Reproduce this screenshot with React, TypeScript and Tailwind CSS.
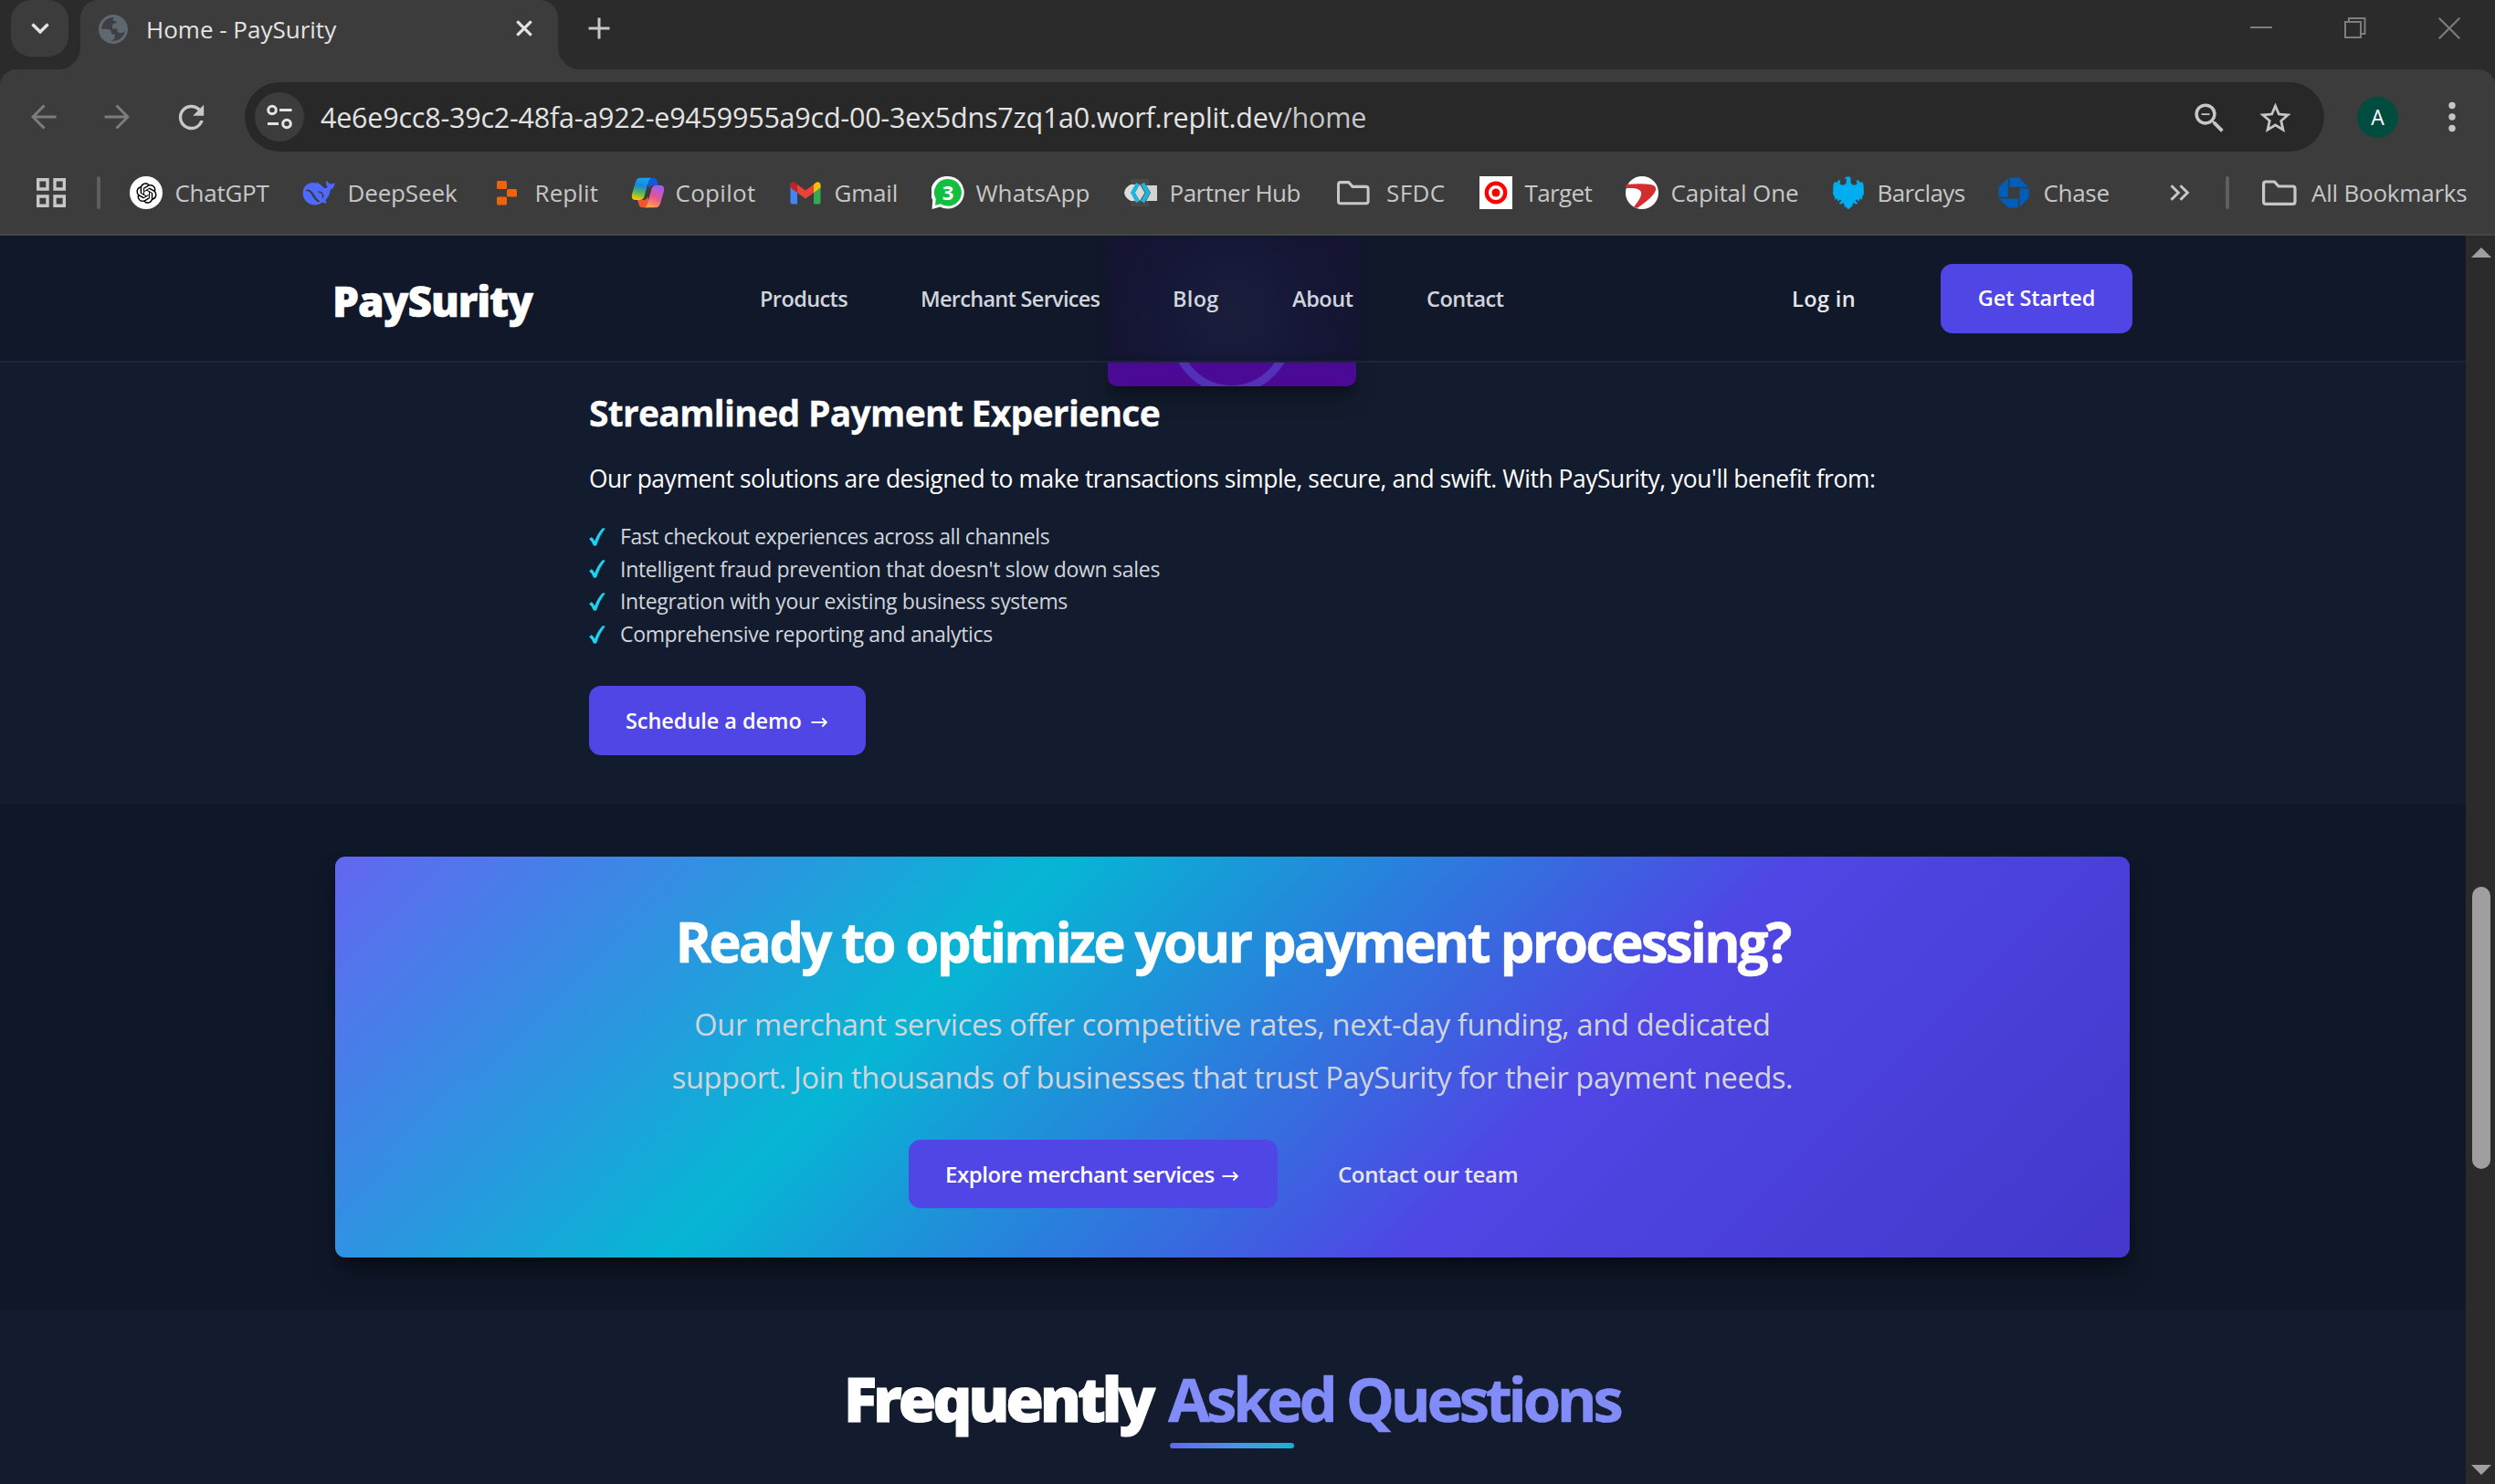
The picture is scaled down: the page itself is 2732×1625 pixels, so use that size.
import type { ReactNode } from "react";
import { RiOpenaiFill } from "react-icons/ri";
import { MdRefresh, MdStarBorder, MdZoomOut } from "react-icons/md";

const FolderIcon = () => (
  <svg width="38" height="28" viewBox="0 0 38 28" fill="none" stroke="#c7c7c7" strokeWidth="3.200" strokeLinejoin="round">
    <path d="M4 2H13.5L18 7H33.5Q36 7 36 9.5V24Q36 26.3 33.5 26.3H4Q1.6 26.3 1.6 24V4.5Q1.6 2 4 2Z" />
  </svg>
);

const GlobeIcon = () => (
  <svg width="32" height="32" viewBox="0 0 32 32">
    <circle cx="16" cy="16" r="16" fill="#5f6770" />
    <path
      d="M17 3.2C10 2.600 4.500 7.500 3.400 13.500L3.600 16H10.500Q13.500 16 14 19.500V21.500H17.500V26.500L13.500 28.500C21 30 27.500 25 28.800 17.800C27 20.500 22.500 21 20.500 18.500V15.500H15V12Q15 10 17.500 10H19.500V7H16.500L15.500 5.500Z"
      fill="#3c3f43"
    />
    <path d="M19.500 3.500V9.500H16V14.500H21.500V18.500H25L28.500 16.500V11Q25.500 5.500 19.500 3.500Z" fill="#5f6770" />
  </svg>
);

const ChatGptIcon = () => (
  <span className="flex size-9 items-center justify-center rounded-full bg-white text-[27px] text-black">
    <RiOpenaiFill />
  </span>
);

const DeepSeekIcon = () => (
  <svg width="36" height="28" viewBox="0 0 36 28">
    <path
      d="M35.500 3.200C34.500 3 34 4.300 31.800 4.500C29.300 4.700 28.300 2.500 26.300 0.800C25.700 3.800 26 6 27.800 7.800C26.500 9 25.300 9.600 23.500 8.500C21.500 7.200 20.600 5 17.500 3.800L17 2.300L15.300 3.400C8 1.200 0.500 6.300 0.600 14.300C0.700 22 6.800 27.500 14.200 27.400C17.500 27.400 20 26.200 22 24.600C24 25.600 26 25.600 27.200 24.900C26.500 24.100 25.600 23.600 25.200 22.400C28.700 19 30.500 14.500 30.500 11C33.600 9.700 35.600 6.500 35.500 3.200Z"
      fill="#4d6bfe"
    />
    <path d="M3 12.500C4.500 8.800 9.500 10.500 12 14.500C14.500 18.500 16 21.500 19.500 23.500L17.500 24.600C13.500 22.500 11.500 17.500 8.800 14.200C6.800 12 4.500 11.800 3 12.500Z" fill="#3c3c3c" />
    <path d="M17.500 13.500Q21 12.200 22.500 16.500Q23 18.800 21.800 19.400" stroke="#3c3c3c" strokeWidth="1.600" fill="none" />
  </svg>
);

const ReplitIcon = () => (
  <svg width="36" height="36" viewBox="0 0 36 36" fill="#f26207">
    <rect x="8" y="5" width="11" height="9" rx="1.500" />
    <rect x="19" y="14" width="11" height="8.500" rx="1.500" />
    <rect x="8" y="22.500" width="11" height="9" rx="1.500" />
  </svg>
);

const CopilotIcon = () => (
  <svg width="37" height="34" viewBox="0 0 37 34" className="ml-0.5 shrink-0">
    <defs>
      <linearGradient id="cpA" x1="0.5" y1="0" x2="0.3" y2="1">
        <stop offset="0" stopColor="#0fa8f0" />
        <stop offset="0.35" stopColor="#1a86dd" />
        <stop offset="0.65" stopColor="#52b760" />
        <stop offset="0.95" stopColor="#f5c400" />
      </linearGradient>
      <linearGradient id="cpB" x1="0.7" y1="0" x2="0.3" y2="1">
        <stop offset="0" stopColor="#a15cf5" />
        <stop offset="0.5" stopColor="#e0559c" />
        <stop offset="0.8" stopColor="#fb7f69" />
        <stop offset="1" stopColor="#ffa94d" />
      </linearGradient>
    </defs>
    <path d="M19 0.800H25Q27.500 0.800 28.500 4L30 9H24Q21 9 20 12L17 5Z" fill="#1559d6" />
    <path d="M18 33.200H12.500Q9.500 33.200 8.600 30L7 25H14Q17 25 18 21L20 29Z" fill="#f0572d" />
    <path d="M10 0.800H22Q20 1.500 19 5L14.500 21Q13.400 25 9.500 25H5Q-0.500 25 1.200 18L5 5Q6.500 0.800 10 0.800Z" fill="url(#cpA)" />
    <path d="M27 33.200H15Q17 32.500 18 29L22.500 13Q23.600 9 27.500 9H32Q37.500 9 35.800 16L32 29Q30.500 33.200 27 33.200Z" fill="url(#cpB)" />
  </svg>
);

const GmailIcon = () => (
  <svg width="34" height="25" viewBox="0 0 34 25">
    <path d="M0.500 3.500V22.500Q0.500 24.500 2.500 24.500H8V11Z" fill="#4285f4" />
    <path d="M26 11V24.500H31.500Q33.500 24.500 33.500 22.500V3.500Z" fill="#34a853" />
    <path d="M26 3V12L33.500 6.500V3.800Q33.500 0.300 30 0.300Q29 0.300 28 1.200Z" fill="#fbbc04" />
    <path d="M8 3V12L17 18.500L26 12V3L17 9.500Z" fill="#ea4335" />
    <path d="M0.500 3.800V6.500L8 12V3L6 1.200Q5 0.300 4 0.300Q0.500 0.300 0.500 3.800Z" fill="#c5221f" />
  </svg>
);

const WhatsAppIcon = () => (
  <svg width="36" height="36" viewBox="0 0 36 36" className="ml-0.5 shrink-0">
    <path d="M18 0A17.800 17.800 0 1 1 9.500 33.500L0.500 36L1.200 26A17.800 17.800 0 0 1 18 0Z" fill="#fff" />
    <path d="M18 3A14.800 14.800 0 1 1 10 30.200L4 32L4.800 25A14.800 14.800 0 0 1 18 3Z" fill="#12bf3f" />
    <text x="18" y="26" textAnchor="middle" fontFamily="Open Sans, sans-serif" fontWeight="700" fontSize="22" fill="#fff">
      3
    </text>
  </svg>
);

const PartnerIcon = () => (
  <svg width="36" height="32" viewBox="0 0 36 32">
    <rect x="7" y="1" width="20" height="30" fill="#474747" />
    <path d="M7 7H14L8 16L14 25H7Q1 22 0 16Q1 10 7 7Z" fill="#dcdcdc" />
    <path d="M24 8H36V25H24L29 16Z" fill="#d2d2d2" />
    <path d="M17 7L22.500 16L17 25L11.500 16Z" fill="#d8d8d8" />
    <path d="M15 6L9.500 16L15 26" stroke="#1ab7dc" strokeWidth="4.500" fill="none" />
    <path d="M20 6L26 16L20 26" stroke="#1ab7dc" strokeWidth="4.500" fill="none" />
  </svg>
);

const TargetIcon = () => (
  <svg width="36" height="36" viewBox="0 0 36 36">
    <rect width="36" height="36" fill="#fff" />
    <circle cx="18" cy="18" r="10.200" fill="none" stroke="#f00" strokeWidth="4.400" />
    <circle cx="18" cy="18" r="4.500" fill="#f00" />
  </svg>
);

const CapitalOneIcon = () => (
  <svg width="36" height="36" viewBox="0 0 36 36">
    <circle cx="18" cy="18" r="18" fill="#fff" />
    <path
      d="M0.800 9Q17 7.600 27 9Q34 10.200 33 15C31.500 21.500 21 29 12.500 35L9 33.500C13.500 28 18 22 17 17.500C16 13.500 7 12.300 0.200 13.500Z"
      fill="#d22e30"
    />
  </svg>
);

const BarclaysIcon = () => (
  <svg width="36" height="36" viewBox="0 0 36 36">
    <path
      d="M16 3L13.500 2.500L16 0.500H19.500L20.500 2V7L22.500 9.500L26 9.500L27.500 8L26.500 5L29 4L30.500 7L33 6L34.500 9L35 19L33.500 22L32.500 26L30.500 24L29.500 28L27.500 25.500L25.500 26.500L28.500 30L26 30.500L23.500 29L22 33L18 36L14 33L12.500 29L10 30.500L7.500 30L10.500 26.500L8.500 25.500L6.500 28L5.500 24L3.500 26L2.500 22L1 19L1.500 9L3 6L5.500 7L7 4L9.500 5L8.500 8L10 9.500L13.500 9.500L15.500 7.500Z"
      fill="#00aeef"
    />
  </svg>
);

const ChaseIcon = () => (
  <svg width="34" height="34" viewBox="0 0 34 34" fill="#005eb8" className="mr-0.5">
    <path d="M12.500 0.500H23L33 10.800H12.500Z" />
    <path d="M33.500 12.500V23L23.500 33V12.500Z" />
    <path d="M21.800 33.500H11L1 23.500H21.800Z" />
    <path d="M0.500 21.800V11L10.800 1V21.800Z" />
  </svg>
);

type Bookmark = { label: string; icon: ReactNode; item: string; tracking: string };

const bookmarks: Bookmark[] = [
  { label: "ChatGPT", icon: <ChatGptIcon />, item: "w-[189px]", tracking: "tracking-[-0.27px]" },
  { label: "DeepSeek", icon: <DeepSeekIcon />, item: "w-[205px]", tracking: "tracking-[-0.15px]" },
  { label: "Replit", icon: <ReplitIcon />, item: "w-[154px]", tracking: "tracking-[0.1px]" },
  { label: "Copilot", icon: <CopilotIcon />, item: "w-[174px]", tracking: "tracking-[0.29px]" },
  { label: "Gmail", icon: <GmailIcon />, item: "w-[155px]", tracking: "tracking-[-0.2px]" },
  { label: "WhatsApp", icon: <WhatsAppIcon />, item: "w-[212px]", tracking: "tracking-[0.1px]" },
  { label: "Partner Hub", icon: <PartnerIcon />, item: "w-[233px]", tracking: "tracking-[-0.5px]" },
  { label: "SFDC", icon: <FolderIcon />, item: "w-[156px]", tracking: "tracking-[0.4px]" },
  { label: "Target", icon: <TargetIcon />, item: "w-[160px]", tracking: "tracking-[-0.6px]" },
  { label: "Capital One", icon: <CapitalOneIcon />, item: "w-[226px]", tracking: "tracking-[-0.1px]" },
  { label: "Barclays", icon: <BarclaysIcon />, item: "w-[182px]", tracking: "tracking-[-0.6px]" },
  { label: "Chase", icon: <ChaseIcon />, item: "w-[188px]", tracking: "tracking-[-0.3px]" },
];

const navLinks = [
  { label: "Products", cls: "w-[176px] tracking-[-0.6px]" },
  { label: "Merchant Services", cls: "w-[276px] tracking-[-0.7px]" },
  { label: "Blog", cls: "w-[131px] tracking-[0.3px]" },
  { label: "About", cls: "w-[147px] tracking-[-0.4px]" },
  { label: "Contact", cls: "w-[400px] tracking-[-0.5px]" },
];

const benefits = [
  { text: "Fast checkout experiences across all channels", cls: "tracking-[-0.42px]" },
  { text: "Intelligent fraud prevention that doesn't slow down sales", cls: "tracking-[-0.29px]" },
  { text: "Integration with your existing business systems", cls: "tracking-[-0.34px]" },
  { text: "Comprehensive reporting and analytics", cls: "tracking-[-0.34px]" },
];

const Arrow = () => (
  <svg width="18" height="12" viewBox="0 0 18 12" fill="none" stroke="#fff" strokeWidth="1.900" className="mt-1 shrink-0">
    <path d="M0.500 6H16.500M12.300 1.500L16.800 6L12.300 10.500" />
  </svg>
);

const Check = () => (
  <svg width="18" height="20" viewBox="0 0 18 20" fill="#22d3ee" stroke="#22d3ee" strokeWidth="0.700">
    <path d="M0.500 12.200L2.900 10.600Q4 11 6.200 15.300Q9 7 14.600 0.800L17.300 0.800Q10.800 9 7.800 19.200H5.200Q3 14 0.500 12.200Z" />
  </svg>
);

function TabStrip() {
  return (
    <div className="flex h-[76px] bg-[#2b2b2b]">
      <div className="relative z-10 ml-3 flex h-[62px] w-[63px] items-center justify-center rounded-[22px] bg-[#3c3c3c]">
        <svg width="20" height="12" viewBox="0 0 20 12" fill="none" stroke="#e3e3e3" strokeWidth="3.400">
          <path d="M1.500 1.500L10 10L18.500 1.500" />
        </svg>
      </div>
      <div className="relative ml-[13px] flex w-[523px] rounded-t-[20px] bg-[#3c3c3c]">
        <span className="absolute bottom-0 -left-[24px] size-6 bg-[#3c3c3c]">
          <span className="block size-6 rounded-br-[24px] bg-[#2b2b2b]" />
        </span>
        <span className="absolute -right-[24px] bottom-0 size-6 bg-[#3c3c3c]">
          <span className="block size-6 rounded-bl-[24px] bg-[#2b2b2b]" />
        </span>
        <div className="ml-5 flex h-[63px] items-center">
          <GlobeIcon />
        </div>
        <span className="ml-5 h-16 w-[405px] text-[26px] leading-[64px] text-[#e3e3e3]">Home - PaySurity</span>
        <svg width="18" height="18" viewBox="0 0 18 18" fill="none" stroke="#e3e3e3" strokeWidth="3.200" className="mt-[22px] shrink-0">
          <path d="M1.300 1.300L16.700 16.700M16.700 1.300L1.300 16.700" />
        </svg>
      </div>
      <svg width="24" height="24" viewBox="0 0 24 24" fill="none" stroke="#c7c7c7" strokeWidth="3" className="mt-[19px] ml-[33px]">
        <path d="M0.500 12H23.500M12 0.500V23.500" />
      </svg>
      <div className="mt-[19px] mr-[38px] ml-auto flex gap-[79px]">
        <svg width="24" height="24" viewBox="0 0 24 24" stroke="#7e7e7e" strokeWidth="2">
          <path d="M0 11H24" />
        </svg>
        <svg width="24" height="24" viewBox="0 0 24 24" fill="none" stroke="#7e7e7e" strokeWidth="2">
          <path d="M1 5H18V22H1ZM5 5V1H22.500V18H18" />
        </svg>
        <svg width="24" height="24" viewBox="0 0 24 24" fill="none" stroke="#7e7e7e" strokeWidth="2">
          <path d="M0.700 0.700L23.300 23.300M23.300 0.700L0.700 23.300" />
        </svg>
      </div>
    </div>
  );
}

function Toolbar() {
  return (
    <div className="bg-[#2b2b2b]">
      <div className="flex h-[90px] items-end rounded-t-[18px] bg-[#3c3c3c] pl-[34px]">
        <div className="flex h-[76px] w-full items-center">
          <svg width="28" height="28" viewBox="0 0 28 28" fill="none" stroke="#7c7c7c" strokeWidth="3">
            <path d="M27.500 14H2.500M14.500 1.500L2 14L14.500 26.500" />
          </svg>
          <svg width="28" height="28" viewBox="0 0 28 28" fill="none" stroke="#7c7c7c" strokeWidth="3" className="ml-[52px]">
            <path d="M0.500 14H25.500M13.500 1.500L26 14L13.500 26.500" />
          </svg>
          <MdRefresh className="ml-[47px] size-[41px] text-[#c7c7c7]" />
          <div className="ml-[38px] flex h-[76px] w-[2277px] shrink-0 items-center rounded-[38px] bg-[#282828]">
            <span className="ml-[11px] flex size-[54px] items-center justify-center rounded-full bg-[#3c3c3c]">
              <svg width="28" height="28" viewBox="0 0 28 28" fill="none" stroke="#e3e3e3" strokeWidth="3">
                <circle cx="6" cy="6.500" r="4.300" />
                <path d="M14 6.500H27.500M1 21.500H13" />
                <circle cx="22" cy="21.500" r="4.300" />
              </svg>
            </span>
            <span className="ml-[18px] text-[30.5px] leading-[76px] tracking-[-0.23px] whitespace-nowrap text-[#e3e3e3]">
              4e6e9cc8-39c2-48fa-a922-e9459955a9cd-00-3ex5dns7zq1a0.worf.replit.dev
              <span className="text-[#c7c7c7]">/home</span>
            </span>
            <MdZoomOut className="mt-0.5 ml-auto size-[43px] text-[#c7c7c7]" />
            <MdStarBorder className="mt-0.5 mr-[33px] ml-[30px] size-[41px] text-[#c7c7c7]" />
          </div>
          <span className="ml-9 flex size-[45px] items-center justify-center rounded-full bg-[#004d40] text-[23px] leading-none text-white">
            A
          </span>
          <svg width="8" height="34" viewBox="0 0 8 34" fill="#c7c7c7" className="ml-[55px]">
            <circle cx="4" cy="4.500" r="3.700" />
            <circle cx="4" cy="17" r="3.700" />
            <circle cx="4" cy="29.500" r="3.700" />
          </svg>
        </div>
      </div>
    </div>
  );
}

function BookmarkBar() {
  return (
    <div className="flex h-[92px] items-center border-b-2 border-[#474747] bg-[#3c3c3c] pl-10 text-[26px] whitespace-nowrap text-[#c7c7c7]">
      <svg width="32" height="32" viewBox="0 0 32 32" fill="none" stroke="#c7c7c7" strokeWidth="3.400">
        <path d="M1.700 1.700H12V12H1.700ZM20 1.700H30.300V12H20ZM1.700 20H12V30.300H1.700ZM20 20H30.300V30.300H20Z" />
      </svg>
      <span className="mr-8 ml-[34px] h-9 w-1 rounded-full bg-[#5f5f5f]" />
      {bookmarks.map((b) => (
        <div key={b.label} className={`flex shrink-0 items-center ${b.item}`}>
          <span className={`flex w-9 shrink-0 justify-center ${b.label === "SFDC" ? "mr-[18px]" : "mr-[13.5px]"}`}>{b.icon}</span>
          <span className={`leading-9 ${b.tracking}`}>{b.label}</span>
        </div>
      ))}
      <svg width="22" height="18" viewBox="0 0 22 18" fill="none" stroke="#c7c7c7" strokeWidth="3">
        <path d="M1.500 1.200L9.300 9L1.500 16.800M11.500 1.200L19.300 9L11.500 16.800" />
      </svg>
      <span className="mr-9 ml-[39px] h-9 w-1 rounded-full bg-[#5f5f5f]" />
      <FolderIcon />
      <span className="ml-4 leading-9 tracking-[-0.22px]">All Bookmarks</span>
    </div>
  );
}

function SiteHeader() {
  return (
    <header className="relative flex h-[139px] items-center overflow-hidden border-b-2 border-[#1d2637] bg-[#101829] pl-[364px]">
      <div className="absolute top-0 left-[1210px] h-[140px] w-[279px] bg-[radial-gradient(circle_at_50%_60%,#1a1e3b_0,#161837_70px,#151533_130px,#141632_100%)] blur-[4px]" />
      <span className="relative mt-1 w-[468px] text-[46px] leading-[60px] font-extrabold tracking-[-1.1px] text-white [-webkit-text-stroke:0.6px_white]">
        PaySurity
      </span>
      <nav className="relative mt-px flex text-[23.5px] leading-9 font-semibold whitespace-nowrap text-[#d1d5db]">
        {navLinks.map((l) => (
          <a key={l.label} className={l.cls}>
            {l.label}
          </a>
        ))}
        <a className="w-[163px] tracking-[0.4px] text-[#e5e7eb]">Log in</a>
      </nav>
      <button className="h-[76px] w-[210px] rounded-[13px] bg-[#4f46e5] pt-px text-[23.5px] font-semibold tracking-[-0.1px] text-white">
        Get Started
      </button>
    </header>
  );
}

function Experience() {
  return (
    <section className="relative h-[484px] bg-[#131c2e] pt-[27px] pl-[645px]">
      <div className="absolute top-0 left-[1213px] h-[26px] w-[272px] rounded-b-[10px] shadow-[0_14px_26px_-4px_rgba(0,0,0,0.4),0_6px_10px_-4px_rgba(0,0,0,0.35)]">
        <div className="h-full overflow-hidden rounded-b-[10px] bg-[#4a0a96]">
          <svg width="272" height="26" viewBox="0 0 272 26">
            <circle cx="135.500" cy="-32" r="61.500" fill="none" stroke="#5230b8" strokeWidth="9" />
          </svg>
        </div>
      </div>
      <h3 className="relative text-[39px] leading-[56px] font-bold tracking-[-0.7px] text-white [-webkit-text-stroke:0.3px_white]">
        Streamlined Payment Experience
      </h3>
      <p className="mt-[22px] text-[26.4px] leading-[44px] tracking-[-0.43px] text-white">
        Our payment solutions are designed to make transactions simple, secure, and swift. With PaySurity, you'll benefit from:
      </p>
      <ul className="mt-6 text-[23px] leading-[35.6px] text-[#d1d5db]">
        {benefits.map((b) => (
          <li key={b.text} className="flex items-center gap-4">
            <Check />
            <span className={b.cls}>{b.text}</span>
          </li>
        ))}
      </ul>
      <button className="mt-[38.6px] flex h-[76px] w-[303px] items-center gap-2.5 rounded-[13px] bg-[#4f46e5] pt-px pl-10 text-[23.5px] font-semibold tracking-[-0.05px] text-white">
        Schedule a demo <Arrow />
      </button>
    </section>
  );
}

function CallToAction() {
  return (
    <section className="h-[553px] bg-[#0f1829] pt-[57px] pl-[367px]">
      <div className="h-[439px] w-[1965px] rounded-[11px] bg-[linear-gradient(135deg,#6366f1_0%,#06b6d4_33.3%,#4f46e5_66.6%,#4338ca_100%)] pt-[58px] text-center shadow-[0_18px_30px_-6px_rgba(0,0,0,0.45),0_7px_12px_-6px_rgba(0,0,0,0.4)]">
        <h2 className="text-[60px] leading-[70px] font-bold tracking-[-2.87px] text-white [-webkit-text-stroke:0.5px_white]">
          Ready to optimize your payment processing?
        </h2>
        <p className="mt-[27px] text-[32.6px] leading-[58.3px] text-[#d1d5db]">
          <span className="block tracking-[-0.33px]">Our merchant services offer competitive rates, next-day funding, and dedicated</span>
          <span className="block tracking-[-0.4px]">support. Join thousands of businesses that trust PaySurity for their payment needs.</span>
        </p>
        <div className="mt-[38px] ml-[628px] flex items-center text-2xl font-semibold">
          <button className="flex h-[75px] w-[404px] items-center gap-2 rounded-[13px] bg-[#4f46e5] pt-px pl-10 tracking-[-0.42px] text-white">
            Explore merchant services <Arrow />
          </button>
          <a className="mt-px ml-[66px] tracking-[-0.35px] text-[#e5e7eb]">Contact our team</a>
        </div>
      </div>
    </section>
  );
}

function Faq() {
  return (
    <section className="h-[191px] bg-[#131c2e] pt-[57px] pl-[924px]">
      <h2 className="flex gap-3.5 text-[67px] leading-[80px] whitespace-nowrap">
        <span className="w-[341px] font-extrabold tracking-[-3.9px] text-white [-webkit-text-stroke:1px_white]">Frequently</span>
        <span className="font-bold tracking-[-4.3px] text-[#818cf8] [-webkit-text-stroke:0.5px_#818cf8]">Asked Questions</span>
      </h2>
      <div className="mt-[9px] ml-[357px] h-1.5 w-[136px] rounded-full bg-linear-to-r from-[#6366f1] to-[#06b6d4]" />
    </section>
  );
}

function Scrollbar() {
  return (
    <div className="flex w-8 shrink-0 flex-col items-center bg-[#2b2b2b] pt-[13px] pb-[10px]">
      <svg width="22" height="11" viewBox="0 0 22 11" fill="#9f9f9f" className="ml-0.5">
        <path d="M11 0L22 11H0Z" />
      </svg>
      <div className="mt-[689px] ml-0.5 h-[309px] w-5 rounded-full bg-[#9f9f9f]" />
      <svg width="22" height="11" viewBox="0 0 22 11" fill="#9f9f9f" className="mt-auto ml-0.5">
        <path d="M0 0H22L11 11Z" />
      </svg>
    </div>
  );
}

export default function App() {
  return (
    <div className="h-[1625px] w-[2732px] overflow-hidden font-['Open_Sans','Noto_Sans',sans-serif]">
      <TabStrip />
      <Toolbar />
      <BookmarkBar />
      <div className="flex h-[1367px]">
        <main className="w-[2700px] shrink-0">
          <SiteHeader />
          <Experience />
          <CallToAction />
          <Faq />
        </main>
        <Scrollbar />
      </div>
    </div>
  );
}
